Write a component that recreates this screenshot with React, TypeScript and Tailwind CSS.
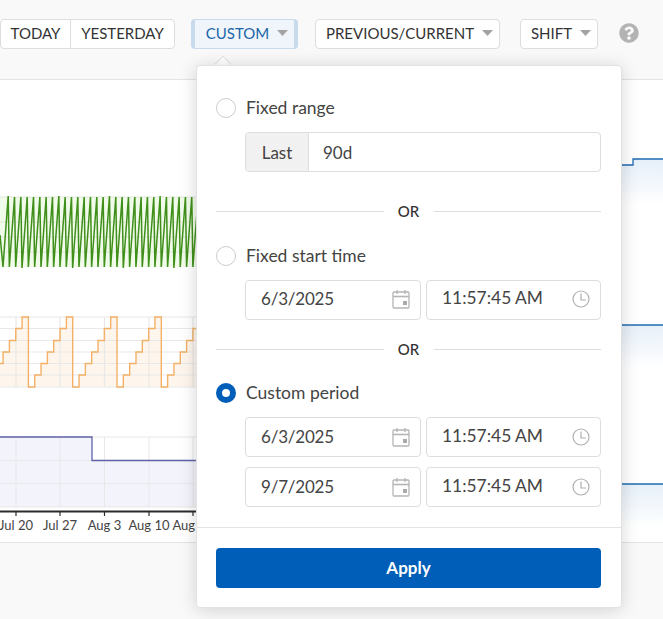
import { FaQuestionCircle } from 'react-icons/fa';

const Caret = ({ color = '#a3a3a3' }: { color?: string }) => (
    <svg width="11" height="6" viewBox="0 0 11 6" className="ml-2 shrink-0">
        <path d="M0 0H11L5.5 6Z" fill={color} />
    </svg>
);

const Calendar = () => (
    <svg width="18" height="20" viewBox="0 0 18 20" fill="none" stroke="#b5b5b5" className="shrink-0">
        <rect x="1" y="3" width="16" height="16" rx="1" strokeWidth="1.3" />
        <path d="M1 7.5H17" strokeWidth="1.6" />
        <path d="M5 1V5M13 1V5" strokeWidth="1.3" />
        <rect x="11" y="12" width="4" height="4" fill="#aaaaaa" stroke="none" />
    </svg>
);

const Clock = () => (
    <svg width="18" height="18" viewBox="0 0 18 18" fill="none" stroke="#b0b0b0" strokeWidth="1.2" className="shrink-0">
        <circle cx="9" cy="9" r="8" />
        <path d="M9 3.5V10H14" />
    </svg>
);

const Radio = ({ label, checked }: { label: string; checked?: boolean }) => (
    <div className="flex items-center h-5 gap-2.5">
        {checked ? (
            <span className="w-5 h-5 rounded-full border-[6px] border-[#005eb8] bg-white" />
        ) : (
            <span className="w-5 h-5 rounded-full border border-[#cccccc] bg-white" />
        )}
        <span className="text-[17.5px] text-[#444444]">{label}</span>
    </div>
);

const Or = () => (
    <div className="flex items-center">
        <div className="flex-1 h-px bg-[#dddddd]" />
        <span className="w-[50px] text-center text-[15px] leading-5 font-medium text-[#333333]">OR</span>
        <div className="flex-1 h-px bg-[#dddddd]" />
    </div>
);

const DateTime = ({ date, raised }: { date: string; raised?: boolean }) => (
    <div className={`flex gap-[5px] ml-[29px] h-10 text-[#444444] ${raised ? 'items-stretch' : ''}`}>
        <div className={`w-[176px] flex items-center justify-between pl-[15px] pr-2.5 bg-white border border-[#dddddd] rounded text-[17px] tracking-[-0.2px] ${raised ? 'pb-0.5' : ''}`}>
            <span className="pb-px">{date}</span>
            <Calendar />
        </div>
        <div className={`flex-1 flex items-center justify-between pl-[15px] pr-2.5 bg-white border border-[#dddddd] rounded text-[17.4px] ${raised ? 'pb-0.5' : ''}`}>
            <span className="pb-px">11:57:45 AM</span>
            <Clock />
        </div>
    </div>
);

const gridColor = '#e8e8e8';

const GreenSeries = () => {
    const teeth = Array.from({ length: 32 }, (_, i) => i);
    // sawtooth: slow rise over most of the period, then a near vertical drop
    const line = teeth
        .map(i => {
            const x = i * 6.33;
            const low = i % 8 === 3 ? 268 : 267;
            return `${x + 3},${low} ${x + 8.2},${i % 8 === 0 ? 196 : 197}`;
        })
        .join(' ');
    return (
        <g>
            <rect x="0" y="197" width="196" height="70" fill="#f1fbea" />
            {[197, 222, 237, 252].map(y => (
                <path key={y} d={`M0 ${y}H196`} stroke="#dfe8da" />
            ))}
            <polyline points={`0,235 ${line}`} fill="none" stroke="#3f8f1a" strokeWidth="1.5" />
        </g>
    );
};

const OrangeSeries = () => {
    const levels = [387, 375, 363.5, 352, 340.5, 328.5, 317];
    const period = 44.3;
    let d = '';
    for (let p = -1; p < 5; p++) {
        const start = 28.4 + p * period;
        levels.forEach((y, i) => {
            const x = start + i * 6.33;
            d += `${d ? 'L' : 'M'}${x} ${y}L${x + 6.33} ${y}`;
        });
    }
    return (
        <g>
            <path d={`${d}L220 387L-20 387Z`} fill="#fef6ec" />
            {levels.map(y => (
                <path key={y} d={`M0 ${y}H196`} stroke={gridColor} strokeWidth="1.2" />
            ))}
            {[16, 60, 104.5, 149, 193].map(x => (
                <path key={x} d={`M${x} 317V387`} stroke={gridColor} strokeWidth="1.2" />
            ))}
            <path d={d} fill="none" stroke="#f4b066" strokeWidth="1.4" />
        </g>
    );
};

const PurpleSeries = () => (
    <g>
        <path d="M0 437H92V460.5H196V507H0Z" fill="#f3f3fc" />
        {[437, 460.5, 483.5, 507].map(y => (
            <path key={y} d={`M0 ${y}H196`} stroke={gridColor} />
        ))}
        {[16, 60, 104.5, 149, 193].map(x => (
            <path key={x} d={`M${x} 437V507`} stroke={gridColor} />
        ))}
        <path d="M0 437H92V460.5H196" fill="none" stroke="#5f62a8" strokeWidth="1.3" />
        <path d="M0 511.5H196" stroke="#2b2b2b" strokeWidth="2" />
        {[16, 60, 104.5, 149, 193].map(x => (
            <path key={x} d={`M${x} 511V516`} stroke="#2b2b2b" strokeWidth="1.2" />
        ))}
        {[
            ['Jul 20', 16],
            ['Jul 27', 60],
            ['Aug 3', 104.5],
            ['Aug 10', 149],
            ['Aug 17', 193],
        ].map(([t, x]) => (
            <text key={t} x={x} y="530" textAnchor="middle" fontSize="13" fill="#444444" fontFamily="Lato, sans-serif">
                {t}
            </text>
        ))}
    </g>
);

const Chart = () => (
    <svg viewBox="0 80 663 462" width="663" height="462" className="block">
        <defs>
            <linearGradient id="blueFade" x1="0" y1="0" x2="0" y2="1">
                <stop offset="0" stopColor="#e6eff9" />
                <stop offset="1" stopColor="#ffffff" />
            </linearGradient>
        </defs>
        <GreenSeries />
        <OrangeSeries />
        <PurpleSeries />
        <path d="M621 165H633V159H663V205H621Z" fill="url(#blueFade)" />
        <path d="M621 325H663V368H621Z" fill="url(#blueFade)" />
        <path d="M621 484H663V527H621Z" fill="url(#blueFade)" />
        <path d="M621 165H633V159H663" fill="none" stroke="#1c6bb0" strokeWidth="1.3" />
        <path d="M621 325H663" stroke="#1c6bb0" strokeWidth="1.3" />
        <path d="M621 484H663" stroke="#1c6bb0" strokeWidth="1.3" />
    </svg>
);

export default function App() {
    return (
        <div className="relative w-[663px] h-[619px] overflow-hidden bg-[#f9f9f9] font-[Lato,sans-serif]">
            <div className="h-20 pt-[19px] flex items-start border-b border-[#e3e3e3] text-[15px] text-[#333333]">
                <div className="flex h-[30px] bg-white border border-[#dddddd] rounded">
                    <span className="w-[70px] pb-0.5 flex items-center justify-center border-r border-[#dddddd]">TODAY</span>
                    <span className="w-[103px] pb-0.5 flex items-center justify-center">YESTERDAY</span>
                </div>
                <div className="ml-4 w-[107px] h-[30px] pb-0.5 pl-[5px] flex items-center justify-center bg-[#eff5fb] border-x-4 border-y border-[#c8dbec] rounded-sm text-[#1b66a8]">
                    CUSTOM
                    <Caret />
                </div>
                <div className="ml-[17px] w-[185px] h-[30px] pb-0.5 pl-1 flex items-center justify-center bg-white border border-[#dddddd] rounded">
                    PREVIOUS/CURRENT
                    <Caret />
                </div>
                <div className="ml-5 w-[78px] h-[30px] pb-0.5 pl-1 flex items-center justify-center bg-white border border-[#dddddd] rounded">
                    SHIFT
                    <Caret />
                </div>
                <FaQuestionCircle className="ml-[21px] mt-[4px] text-[#b3b3b3]" size={20} />
            </div>

            <div className="bg-white border-b border-[#e3e3e3]">
                <Chart />
            </div>

            <div className="absolute left-[217px] top-[58px] w-3 h-3 rotate-45 bg-white border-l border-t border-[#e3e3e3]" />
            <div className="absolute left-[196px] top-[65px] w-[426px] h-[543px] flex flex-col bg-white border border-[#e2e2e2] rounded shadow-[0_2px_18px_rgba(0,0,0,0.16)]">
                <div className="pl-[19px] pr-5 pt-[32px]">
                    <Radio label="Fixed range" />
                    <div className="mt-[14px] ml-[29px] h-10 flex bg-white border border-[#dddddd] rounded text-[17px] text-[#444444]">
                        <span className="w-[63px] pt-px flex items-center justify-center bg-[#f1f1f1] border-r border-[#dddddd] rounded-l">Last</span>
                        <span className="pt-px flex items-center pl-[14px]">90d</span>
                    </div>
                    <div className="mt-[29px]">
                        <Or />
                    </div>
                    <div className="mt-[25px]">
                        <Radio label="Fixed start time" />
                    </div>
                    <div className="mt-[14px]">
                        <DateTime date="6/3/2025" raised />
                    </div>
                    <div className="mt-[19px]">
                        <Or />
                    </div>
                    <div className="mt-[24px]">
                        <Radio label="Custom period" checked />
                    </div>
                    <div className="mt-[14px] flex flex-col gap-2.5">
                        <DateTime date="6/3/2025" />
                        <DateTime date="9/7/2025" />
                    </div>
                </div>
                <div className="mt-5 pl-[19px] pr-5 pt-5 border-t border-[#e3e3e3]">
                    <button className="w-full h-10 bg-[#005eb8] rounded text-white text-[17px] font-bold">Apply</button>
                </div>
            </div>
        </div>
    );
}
